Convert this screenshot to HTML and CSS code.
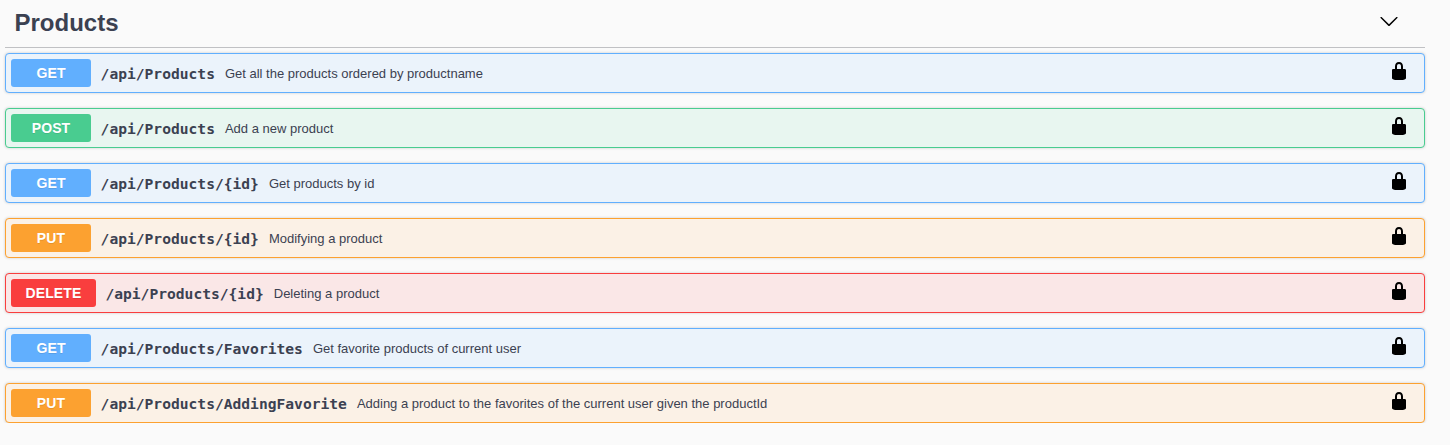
FILE: index.html
```html
<!DOCTYPE html>
<html lang="en">
<head>
<meta charset="utf-8">
<title>Products API</title>
<link rel="stylesheet" href="styles.css">
</head>
<body>
<svg class="defs" width="0" height="0" aria-hidden="true">
  <symbol id="lock" viewBox="0 0 20 20"><path d="M15.8 8H14V5.6C14 2.703 12.665 1 10 1 7.334 1 6 2.703 6 5.6V8H4c-.553 0-1 .646-1 1.199V17c0 .549.428 1.139.951 1.307l1.197.387C5.672 18.861 6.55 19 7.1 19h5.8c.549 0 1.428-.139 1.951-.307l1.196-.387c.524-.167.953-.757.953-1.306V9.199C17 8.646 16.352 8 15.8 8zM12 8H8V5.199C8 3.754 8.797 3 10 3c1.203 0 2 .754 2 2.199V8z"/></symbol>
</svg>
<main class="section">
  <header class="tag">
    <h3 class="tag-name">Products</h3>
    <svg class="icon chevron" viewBox="0 0 20 20"><path d="M17.418 6.109c.272-.268.709-.268.979 0s.271.701 0 .969l-7.908 7.83c-.27.268-.707.268-.979 0l-7.908-7.83c-.27-.268-.27-.701 0-.969.271-.268.709-.268.979 0L10 13.25l7.418-7.141z"/></svg>
  </header>
  <div class="operations">
    <div class="op get"><span class="method">GET</span><span class="path">/api/Products</span><span class="summary">Get all the products ordered by productname</span><svg class="icon lock"><use href="#lock"/></svg></div>
    <div class="op post"><span class="method">POST</span><span class="path">/api/Products</span><span class="summary">Add a new product</span><svg class="icon lock"><use href="#lock"/></svg></div>
    <div class="op get"><span class="method">GET</span><span class="path">/api/Products/{id}</span><span class="summary">Get products by id</span><svg class="icon lock"><use href="#lock"/></svg></div>
    <div class="op put"><span class="method">PUT</span><span class="path">/api/Products/{id}</span><span class="summary">Modifying a product</span><svg class="icon lock"><use href="#lock"/></svg></div>
    <div class="op delete"><span class="method">DELETE</span><span class="path">/api/Products/{id}</span><span class="summary">Deleting a product</span><svg class="icon lock"><use href="#lock"/></svg></div>
    <div class="op get"><span class="method">GET</span><span class="path">/api/Products/Favorites</span><span class="summary">Get favorite products of current user</span><svg class="icon lock"><use href="#lock"/></svg></div>
    <div class="op put"><span class="method">PUT</span><span class="path">/api/Products/AddingFavorite</span><span class="summary">Adding a product to the favorites of the current user given the productId</span><svg class="icon lock"><use href="#lock"/></svg></div>
  </div>
</main>
</body>
</html>
```
FILE: styles.css
```css
* { box-sizing: border-box; }
body {
  margin: 0;
  background: #fafafa;
  color: #3b4151;
  font-family: "Liberation Sans", Arial, sans-serif;
}
.defs { display: none; }
.section { width: 1420px; margin-left: 5px; }
.tag {
  display: flex;
  align-items: center;
  justify-content: space-between;
  height: 48px;
  padding: 0 26px 3px 9.5px;
  border-bottom: 1px solid #c0c1c4;
}
.tag-name { margin: 1px 0 0; font-size: 24px; line-height: 28px; }
.icon { width: 20px; height: 20px; flex: none; fill: #000; }
.chevron { margin-bottom: 2px; }
.operations {
  display: flex;
  flex-direction: column;
  gap: 15px;
  padding-top: 5px;
}
.op {
  display: flex;
  align-items: center;
  height: 40px;
  padding: 0 15px 0 5px;
  border: 1px solid var(--accent);
  border-radius: 4px;
  background: var(--tint);
  box-shadow: 0 0 3px rgba(0, 0, 0, .19);
}
.method {
  min-width: 80px;
  height: 28px;
  padding: 0 14.5px;
  border-radius: 3px;
  background: var(--accent);
  color: #fff;
  font-size: 14px;
  font-weight: 700;
  letter-spacing: .1px;
  line-height: 28px;
  text-align: center;
  text-shadow: 0 1px 0 rgba(0, 0, 0, .1);
}
.path {
  padding: 2px 10px 0 9.6px;
  font-family: "DejaVu Sans Mono", monospace;
  font-size: 14.61px;
  font-weight: 700;
  line-height: 20px;
}
.summary { flex: 1; padding-top: 2px; font-size: 13px; line-height: 16px; }
.lock { margin-bottom: 4px; }
.get { --accent: #61affe; --tint: #ebf3fb; }
.post { --accent: #49cc90; --tint: #e8f6f0; }
.put { --accent: #fca130; --tint: #fbf1e6; }
.delete { --accent: #f93e3e; --tint: #fae7e7; }
```
